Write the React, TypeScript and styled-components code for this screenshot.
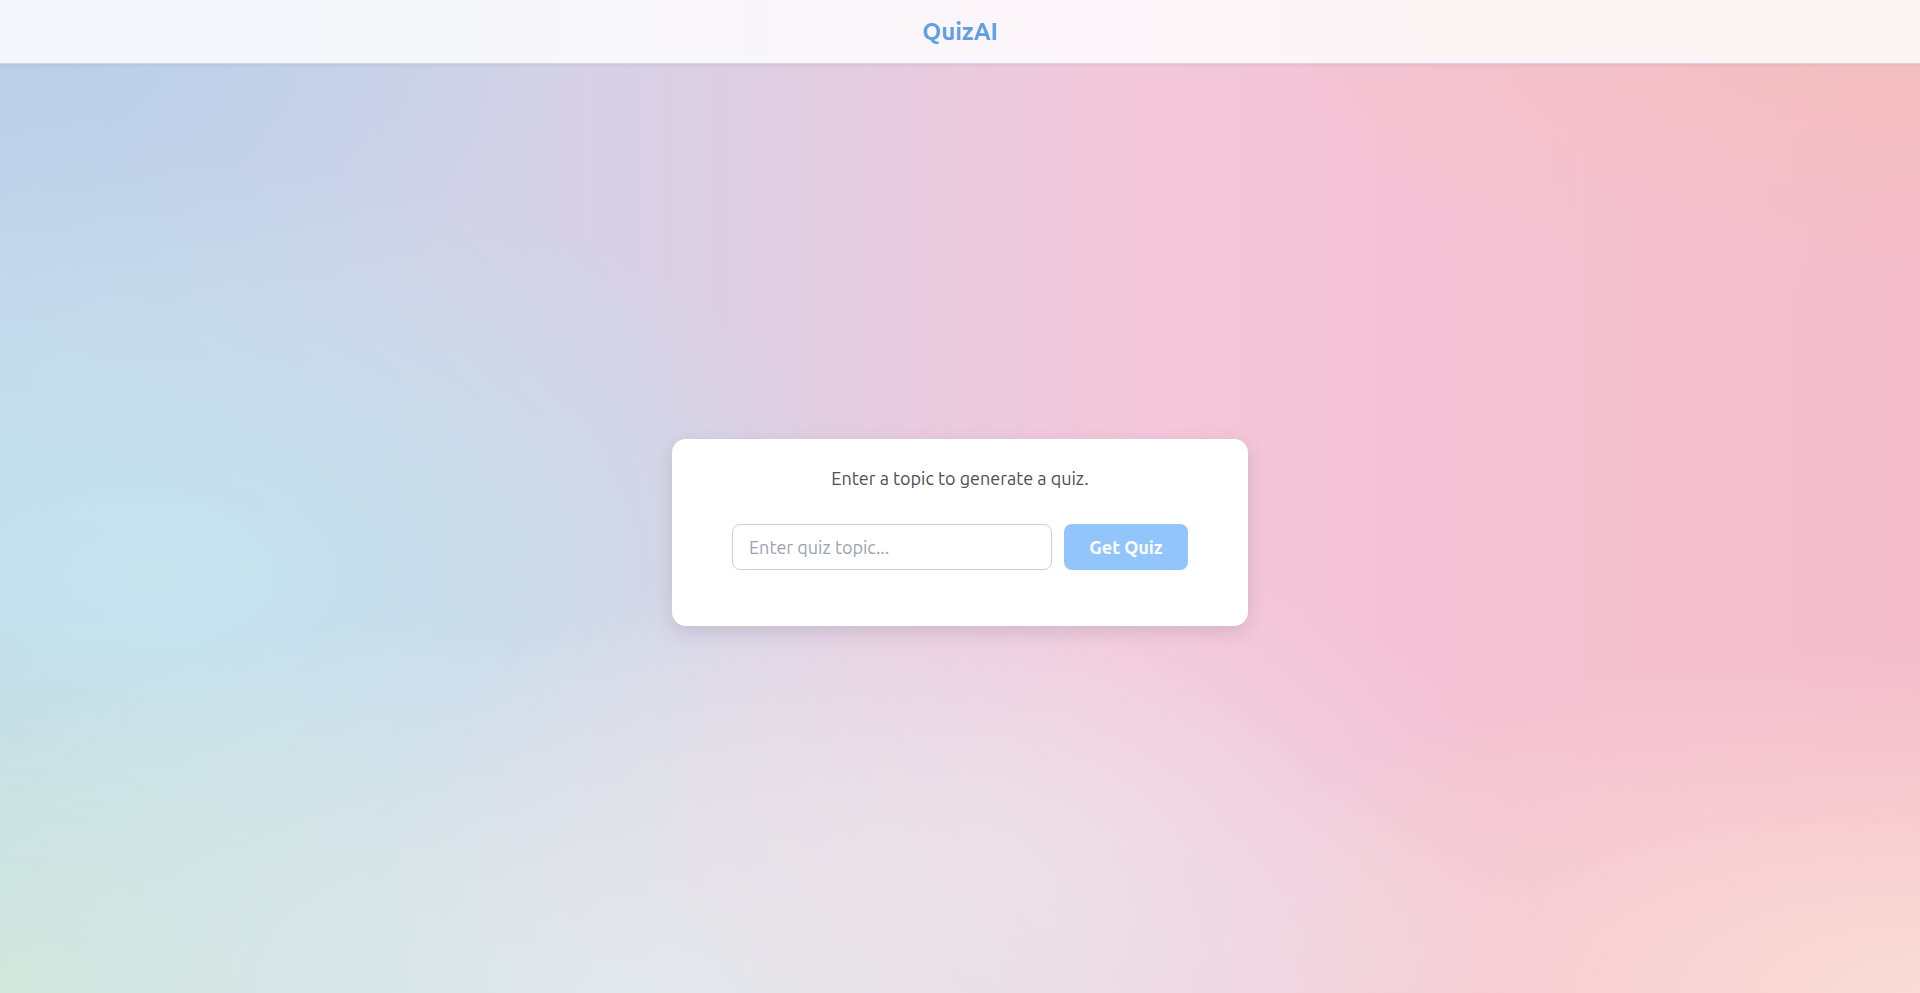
import React, { useState } from "react";
import styled, { createGlobalStyle } from "styled-components";

const GlobalStyle = createGlobalStyle`
  * {
    box-sizing: border-box;
  }

  body {
    margin: 0;
    font-family: "Ubuntu", "Noto Sans", "Open Sans", sans-serif;
    color: #4b5563;
  }
`;

const Page = styled.div`
  min-height: 100vh;
  display: flex;
  flex-direction: column;
  background:
    radial-gradient(ellipse 30% 35% at 50% 88%, rgba(240, 228, 234, 0.75), transparent 100%),
    radial-gradient(ellipse 45% 40% at 33% 100%, rgba(222, 236, 236, 0.95), transparent 100%),
    radial-gradient(ellipse 32% 38% at 0% 100%, rgba(205, 229, 215, 1), transparent 100%),
    radial-gradient(ellipse 40% 35% at 100% 100%, rgba(250, 221, 214, 1), transparent 100%),
    radial-gradient(ellipse 38% 42% at 8% 58%, rgba(196, 228, 238, 1), transparent 100%),
    radial-gradient(ellipse 35% 30% at 100% 0%, rgba(245, 192, 190, 1), transparent 100%),
    radial-gradient(ellipse 30% 30% at 0% 5%, rgba(186, 206, 232, 1), transparent 100%),
    linear-gradient(90deg, #c3d6ea 0%, #d8d1e5 33%, #f3c7da 58%, #f4bccb 100%);
`;

const Header = styled.header`
  height: 64px;
  display: flex;
  align-items: center;
  justify-content: center;
  background: rgba(255, 255, 255, 0.82);
  border-bottom: 1px solid rgba(160, 175, 215, 0.45);
  box-shadow: 0 1px 4px rgba(120, 130, 170, 0.15);
`;

const Logo = styled.h1`
  margin: 0;
  font-size: 24px;
  font-weight: 700;
  color: #5f9fe6;
`;

const Main = styled.main`
  flex: 1;
  display: flex;
  align-items: center;
  justify-content: center;
  padding-top: 8px;
`;

const Card = styled.div`
  width: 576px;
  padding: 24px 32px 56px;
  background: #fff;
  border-radius: 14px;
  box-shadow: 0 6px 18px rgba(90, 80, 110, 0.18);
  display: flex;
  flex-direction: column;
  align-items: center;
`;

const Prompt = styled.p`
  margin: 0 0 31px;
  font-size: 18px;
  line-height: 30px;
  color: #4b5058;
`;

const Form = styled.form`
  display: flex;
  gap: 12px;
`;

const TopicInput = styled.input`
  width: 320px;
  height: 46px;
  padding: 0 16px;
  border: 1px solid #cfd3d8;
  border-radius: 8px;
  font-family: inherit;
  font-size: 18px;
  color: #374151;
  outline: none;

  &::placeholder {
    color: #9ca3af;
  }
`;

const SubmitButton = styled.button<{ $disabled: boolean }>`
  width: 124px;
  height: 46px;
  border: none;
  border-radius: 8px;
  background: ${(p) => (p.$disabled ? "#93c5fd" : "#3b82f6")};
  color: #fff;
  font-family: inherit;
  font-size: 18px;
  font-weight: 700;
  cursor: ${(p) => (p.$disabled ? "not-allowed" : "pointer")};
`;

const App: React.FC = () => {
  const [topic, setTopic] = useState("");
  const empty = topic.trim() === "";

  return (
    <>
      <GlobalStyle />
      <Page>
        <Header>
          <Logo>QuizAI</Logo>
        </Header>
        <Main>
          <Card>
            <Prompt>Enter a topic to generate a quiz.</Prompt>
            <Form onSubmit={(e) => e.preventDefault()}>
              <TopicInput
                placeholder="Enter quiz topic..."
                value={topic}
                onChange={(e) => setTopic(e.target.value)}
              />
              <SubmitButton type="submit" $disabled={empty} disabled={empty}>
                Get Quiz
              </SubmitButton>
            </Form>
          </Card>
        </Main>
      </Page>
    </>
  );
};

export default App;
